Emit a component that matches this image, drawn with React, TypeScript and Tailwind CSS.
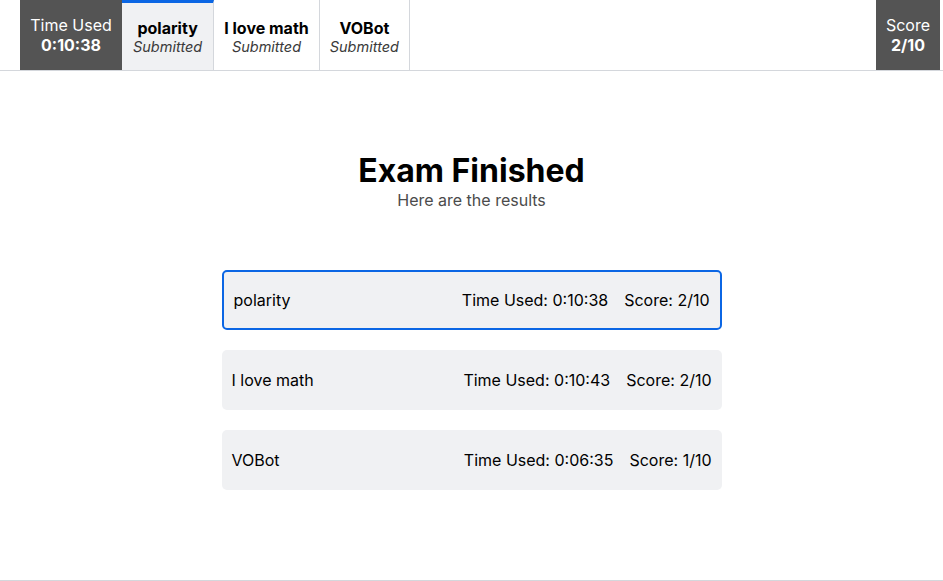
import React from "react";

const tabs = [
  { name: "polarity", active: true },
  { name: "I love math", active: false },
  { name: "VOBot", active: false },
];

const results = [
  { name: "polarity", time: "0:10:38", score: "2/10", active: true },
  { name: "I love math", time: "0:10:43", score: "2/10", active: false },
  { name: "VOBot", time: "0:06:35", score: "1/10", active: false },
];

export default function App() {
  return (
    <div
      className="flex h-[581px] w-full flex-col bg-white text-black"
      style={{ fontFamily: "Inter, 'Noto Sans', sans-serif" }}
    >
      <header className="flex h-[71px] shrink-0 border-b border-[#d4d7dc]">
        <div className="ml-5 flex w-[102px] flex-col items-center justify-center bg-[#545454] text-white">
          <div className="text-[16px] leading-[20px]">Time Used</div>
          <div className="text-[16px] font-bold leading-[20px]">0:10:38</div>
        </div>
        {tabs.map((t) => (
          <div
            key={t.name}
            className={
              t.active
                ? "flex flex-col items-center border-r border-t-[3px] border-r-[#d4d7dc] border-t-[#0b66e4] bg-[#f0f1f3] px-[11px] pt-[15px]"
                : "flex flex-col items-center border-r border-[#d4d7dc] px-[10px] pt-[18px]"
            }
          >
            <div className="text-[16px] font-bold leading-[20px]">{t.name}</div>
            <div className="text-[14.5px] italic leading-[18px] text-[#3a3a3a]">Submitted</div>
          </div>
        ))}
        <div className="flex-1" />
        <div className="mr-[3px] flex w-[64px] flex-col items-center justify-center bg-[#545454] text-white">
          <div className="text-[16px] leading-[20px]">Score</div>
          <div className="text-[16px] font-bold leading-[20px]">2/10</div>
        </div>
      </header>

      <main className="flex flex-1 flex-col items-center pt-[82px]">
        <h1 className="text-[32px] font-bold leading-[36px]">Exam Finished</h1>
        <p className="mt-[1px] text-[16px] leading-[20px] text-[#4b4b4b]">Here are the results</p>

        <div className="mt-[60px] flex w-[500px] flex-col gap-5">
          {results.map((r) => (
            <div
              key={r.name}
              className={
                r.active
                  ? "flex h-[60px] items-center justify-between rounded-[5px] border-2 border-[#0b66e4] bg-[#f0f1f3] px-[10px] text-[16px]"
                  : "flex h-[60px] items-center justify-between rounded-[5px] bg-[#f0f1f3] px-[10px] text-[16px]"
              }
            >
              <span>{r.name}</span>
              <span className="flex gap-4">
                <span>Time Used: {r.time}</span>
                <span>Score: {r.score}</span>
              </span>
            </div>
          ))}
        </div>
      </main>
      <div className="h-px shrink-0 bg-[#d4d7dc]" />
    </div>
  );
}
